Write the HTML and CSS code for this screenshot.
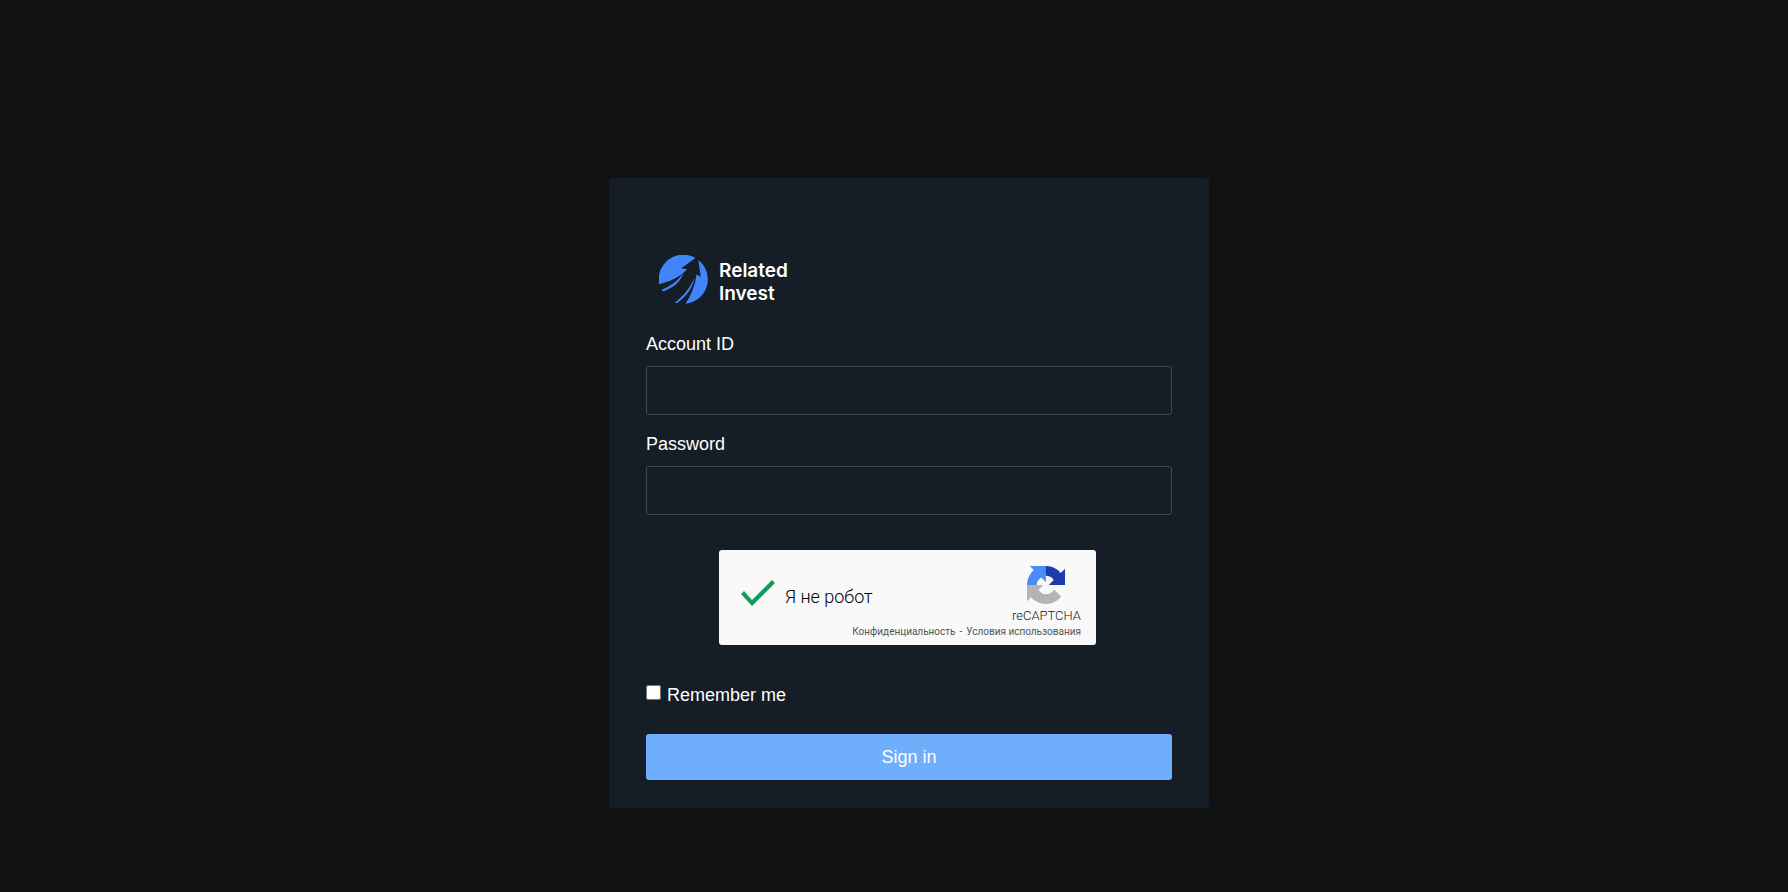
FILE: index.html
```
<!DOCTYPE html>
<html lang="en">
<head>
    <meta charset="UTF-8">
    <meta name="viewport" content="width=device-width, initial-scale=1.0">
    <title>Sign in - Related Invest</title>
    <link rel="stylesheet" href="styles.css">
</head>
<body>
    <main class="page">
        <form class="login-card">
            <a class="logo" href="#">
                <svg class="logo-mark" viewBox="177 255 148 148" aria-hidden="true">
                    <path d="M177 343V316A74 74 0 0 1 287 264L244 295L262 298C240 322 205 337 177 343Z"/>
                    <path d="M252 306C236 332 215 346 184 361L191 365C222 352 242 336 252 306Z"/>
                    <path d="M285 323C270 355 252 378 225 399L231 401C260 380 280 352 285 323Z"/>
                    <path d="M296 270A74 74 0 0 1 257 402C275 375 287 345 290 314L303 321Z"/>
                </svg>
                <span class="logo-text">Related<br>Invest</span>
            </a>

            <label class="field-label" for="account-id">Account ID</label>
            <input class="field" type="text" id="account-id" name="account">

            <label class="field-label" for="password">Password</label>
            <input class="field" type="password" id="password" name="password">

            <div class="captcha">
                <div class="captcha-check">
                    <input type="checkbox" id="robot" checked>
                    <label for="robot">Я не робот</label>
                </div>
                <div class="captcha-brand">
                    <svg viewBox="0 0 64 64" aria-hidden="true">
                        <path fill="#1c3aa9" d="M64 31.955l-.033-1.37V4.687l-7.16 7.16C50.948 4.674 42.033.093 32.05.093c-10.4 0-19.622 4.96-25.458 12.64l11.736 11.86a15.55 15.55 0 0 1 4.754-5.334c2.05-1.6 4.952-2.906 8.968-2.906.485 0 .86.057 1.135.163 4.976.393 9.288 3.14 11.828 7.124l-8.307 8.307L64 31.953"/>
                        <path fill="#4a8ef5" d="M31.862.094l-1.37.033H4.594l7.16 7.16C4.58 13.147 0 22.06 0 32.046c0 10.4 4.96 19.622 12.64 25.458L24.5 45.768a15.55 15.55 0 0 1-5.334-4.754c-1.6-2.05-2.906-4.952-2.906-8.968 0-.485.057-.86.163-1.135.393-4.976 3.14-9.288 7.124-11.828l8.307 8.307L31.86.095"/>
                        <path fill="#b4b4b4" d="M.001 32.045l.033 1.37v25.898l7.16-7.16c5.86 7.173 14.774 11.754 24.76 11.754 10.4 0 19.622-4.96 25.458-12.64l-11.736-11.86a15.55 15.55 0 0 1-4.754 5.334c-2.05 1.6-4.952 2.906-8.968 2.906-.485 0-.86-.057-1.135-.163-4.976-.393-9.288-3.14-11.828-7.124l8.307-8.307c-10.522.04-22.4.066-27.295-.005"/>
                    </svg>
                    <span>reCAPTCHA</span>
                </div>
                <div class="captcha-links">
                    <a href="#">Конфиденциальность</a>
                    <span>-</span>
                    <a href="#">Условия использования</a>
                </div>
            </div>

            <div class="remember">
                <input type="checkbox" id="remember" name="remember">
                <label for="remember">Remember me</label>
            </div>

            <button type="submit" class="submit-button">Sign in</button>
        </form>
    </main>
</body>
</html>
```

FILE: styles.css
```
* {
    box-sizing: border-box;
}

body {
    margin: 0;
    background-color: #111;
    color: #fff;
    font-family: "Liberation Sans", Arial, sans-serif;
    font-size: 18px;
    line-height: 24px;
}

.page {
    display: flex;
    justify-content: center;
    align-items: center;
    min-height: 100vh;
    padding: 94px 0 0 30px;
}

.login-card {
    display: flex;
    flex-direction: column;
    width: 100%;
    max-width: 600px;
    padding: 77px 37px 28px;
    background-color: #151d26;
    border-radius: 4px;
}

/* logo */
.logo {
    display: flex;
    align-items: flex-start;
    align-self: flex-start;
    gap: 11px;
    height: 49px;
    margin: 0 0 28px 13px;
    color: #fff;
    text-decoration: none;
}

.logo-mark {
    width: 49px;
    height: 49px;
    fill: #4285fa;
}

.logo-text {
    padding-top: 4px;
    font-family: Inter, sans-serif;
    font-size: 19px;
    font-weight: 600;
    line-height: 23px;
}

/* fields */
.field-label {
    margin-bottom: 10px;
}

.field {
    width: 100%;
    height: 49px;
    margin-bottom: 17px;
    padding: 0 16px;
    background-color: transparent;
    border: 1px solid #40474e;
    border-radius: 3px;
    color: #fff;
    font: inherit;
    outline: none;
}

.field:focus {
    border-color: #6eaefa;
}

/* captcha */
.captcha {
    display: grid;
    grid-template-columns: 1fr auto;
    align-self: center;
    width: 100%;
    max-width: 377px;
    margin: 18px 3px 38px 0;
    padding: 16px 15px 5px 22px;
    background-color: #f9f9f9;
    border-radius: 3px;
    color: #444;
    font-family: Roboto, sans-serif;
}

.captcha-check {
    display: flex;
    gap: 10px;
    padding-top: 14px;
    color: #000;
    font-weight: 300;
}

.captcha-check input {
    appearance: none;
    width: 34px;
    height: 26px;
    margin: 0;
    background-color: #0f9d58;
    clip-path: polygon(0 14px, 3px 11px, 11px 20px, 31px 0, 34px 3px, 11px 26px);
}

.captcha-check label {
    padding-top: 5px;
}

.captcha-brand {
    display: flex;
    flex-direction: column;
    align-items: center;
    color: #222;
    font-size: 13px;
    font-weight: 300;
    line-height: 16px;
}

.captcha-brand svg {
    width: 38px;
    height: 38px;
    margin-bottom: 4px;
}

.captcha-links {
    display: flex;
    grid-column: 1 / -1;
    justify-content: flex-end;
    gap: 4px;
    font-size: 10px;
    line-height: 16px;
}

.captcha-links a {
    color: #555;
    text-decoration: none;
}

/* remember + submit */
.remember {
    display: flex;
    gap: 6px;
    margin-bottom: 27px;
}

.remember input {
    width: 15px;
    height: 15px;
    margin: 2px 0 0;
}

.submit-button {
    width: 100%;
    height: 46px;
    background-color: #6eaefa;
    border: none;
    border-radius: 3px;
    color: #fff;
    font: inherit;
    cursor: pointer;
}

.submit-button:hover {
    background-color: #5a9ff0;
}
```
